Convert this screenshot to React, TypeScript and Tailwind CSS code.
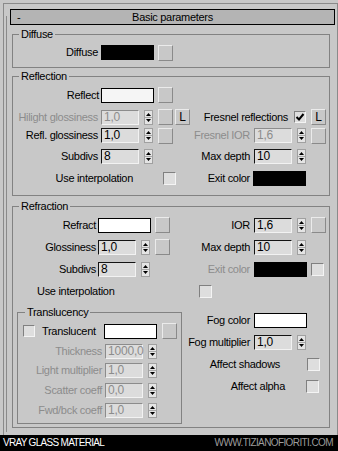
import React from 'react';

type Kids = { children?: React.ReactNode; className?: string };

function Lab({ w, dim, children }: { w: string; dim?: boolean; children: React.ReactNode }) {
  return (
    <div className={`${w} shrink-0 text-right whitespace-nowrap ${dim ? 'text-[#8c8c8c]' : ''}`}>
      {children}
    </div>
  );
}

function Field({ v, dim }: { v: string; dim?: boolean }) {
  return (
    <div
      className={`w-[38px] h-[15px] shrink-0 border pl-[2px] text-[12px] tracking-[-0.2px] leading-[13px] bg-[#dcdcdc] border-r-[#f2f2f2] border-b-[#f2f2f2] ${
        dim ? 'border-t-[#8c8c8c] border-l-[#8c8c8c] text-[#8c8c8c]' : 'border-t-[#141414] border-l-[#141414] text-black'
      }`}
    >
      {v}
    </div>
  );
}

function Spin({ className = '' }: Kids) {
  return (
    <svg width="9" height="15" viewBox="0 0 9 15" className={`shrink-0 ${className}`}>
      <rect x="0.5" y="0.5" width="8" height="14" fill="#e4e4e4" stroke="#a0a0a0" />
      <line x1="1" y1="7.5" x2="8" y2="7.5" stroke="#a8a8a8" />
      <path d="M2 6h5L4.5 3z" fill="#000" />
      <path d="M2 9h5l-2.5 3z" fill="#000" />
    </svg>
  );
}

function Btn({ children, className = '' }: Kids) {
  return (
    <div
      className={`w-[15px] h-[16px] shrink-0 border border-t-[#ebebeb] border-l-[#ebebeb] border-r-[#8a8a8a] border-b-[#8a8a8a] flex items-center justify-center text-[12px] text-black leading-none ${className}`}
    >
      {children}
    </div>
  );
}

function Check({ on, small, className = '' }: { on?: boolean; small?: boolean; className?: string }) {
  return (
    <div
      className={`${small ? 'w-[12px] h-[12px]' : 'w-[13px] h-[13px]'} shrink-0 border border-t-[#808080] border-l-[#808080] border-r-[#f4f4f4] border-b-[#f4f4f4] bg-[#dedede] flex items-center justify-center ${className}`}
    >
      {on && (
        <svg width="10" height="10" viewBox="0 0 10 10">
          <path d="M1.5 5l2.5 2.5L8.5 2" fill="none" stroke="#000" strokeWidth="2" />
        </svg>
      )}
    </div>
  );
}

function Swatch({ c, className = '' }: { c: string; className?: string }) {
  return <div className={`w-[53px] h-[15px] shrink-0 border border-black ${c} ${className}`} />;
}

function Group({ title, className = '', legend = 'ml-[6px]', children }: Kids & { title: string; legend?: string }) {
  return (
    <fieldset className={`border border-[#828282] ${className}`}>
      <legend className={`${legend} px-[2px] leading-[12px]`}>{title}</legend>
      {children}
    </fieldset>
  );
}

export default function App() {
  return (
    <div className="w-[338px] h-[451px] bg-[#c8c8c8] flex flex-col overflow-hidden text-[11px] tracking-[-0.3px] text-black font-['Liberation_Sans',Arial,sans-serif]">
      <div className="h-[435px] pt-[3px] pl-[3px]">
        <div className="w-[335px] h-full border-l border-t border-r border-[#8a8a8a]">
          <div className="ml-[2px] mt-[12px] h-[416px] border-l border-[#8a8a8a] flex flex-col items-start">
            {/* rollout title */}
            <div className="-mt-[7px] ml-[3px] w-[325px] h-[16px] shrink-0 border border-black bg-[#b4b4b4] grid grid-cols-[20px_1fr_20px] items-center leading-[14px]">
              <span className="pl-[6px]">-</span>
              <span className="text-center">Basic parameters</span>
              <span />
            </div>

            {/* Diffuse */}
            <Group title="Diffuse" className="ml-[5px] mt-[3px] w-[318px]">
              <div className="pt-[4px] pb-[6px]">
                <div className="flex items-center h-[17px]">
                  <Lab w="w-[88px] pr-[3px]">Diffuse</Lab>
                  <Swatch c="bg-black" />
                  <Btn className="ml-[4px]" />
                </div>
              </div>
            </Group>

            {/* Reflection */}
            <Group title="Reflection" className="ml-[5px] mt-[2px] w-[318px]">
              <div className="pb-[6px]">
                <div className="flex items-center h-[26px]">
                  <Lab w="w-[88px] pr-[2px]">Reflect</Lab>
                  <Swatch c="bg-[#f5f5f5]" />
                  <Btn className="ml-[4px]" />
                </div>
                <div className="flex items-center h-[18px]">
                  <div className="w-[177px] flex items-center">
                    <Lab w="w-[88px] pr-[3px]" dim>Hilight glossiness</Lab>
                    <Field v="1,0" dim />
                    <Spin className="ml-[5px]" />
                    <Btn className="ml-[5px]" />
                    <Btn className="ml-[2px]">L</Btn>
                  </div>
                  <div className="flex items-center">
                    <Lab w="w-[104px] pr-[6px]">Fresnel reflections</Lab>
                    <Check on small />
                    <Btn className="ml-[5px]">L</Btn>
                  </div>
                </div>
                <div className="flex items-center h-[19px]">
                  <div className="w-[177px] flex items-center">
                    <Lab w="w-[88px] pr-[3px]">Refl. glossiness</Lab>
                    <Field v="1,0" />
                    <Spin className="ml-[5px]" />
                    <Btn className="ml-[5px]" />
                  </div>
                  <div className="flex items-center">
                    <Lab w="w-[64px] pr-[4px]" dim>Fresnel IOR</Lab>
                    <Field v="1,6" dim />
                    <Spin className="ml-[5px]" />
                    <Btn className="ml-[5px]" />
                  </div>
                </div>
                <div className="flex items-center h-[22px]">
                  <div className="w-[177px] flex items-center">
                    <Lab w="w-[88px] pr-[3px]">Subdivs</Lab>
                    <Field v="8" />
                    <Spin className="ml-[5px]" />
                  </div>
                  <div className="flex items-center">
                    <Lab w="w-[64px] pr-[4px]">Max depth</Lab>
                    <Field v="10" />
                    <Spin className="ml-[5px]" />
                  </div>
                </div>
                <div className="flex items-center h-[22px]">
                  <div className="w-[177px] flex items-center">
                    <Lab w="w-[121px] pr-[1px]">Use interpolation</Lab>
                    <Check className="ml-[29px]" />
                  </div>
                  <div className="flex items-center">
                    <Lab w="w-[63px] pr-[3px]">Exit color</Lab>
                    <Swatch c="bg-black" />
                  </div>
                </div>
              </div>
            </Group>

            {/* Refraction */}
            <Group title="Refraction" className="ml-[5px] mt-[4px] w-[318px]">
              <div className="pt-[2px] pb-[3px]">
                <div className="flex items-center h-[22px]">
                  <div className="w-[177px] flex items-center">
                    <Lab w="w-[85px] pr-[2px]">Refract</Lab>
                    <Swatch c="bg-white" />
                    <Btn className="ml-[4px]" />
                  </div>
                  <div className="flex items-center">
                    <Lab w="w-[64px] pr-[4px]">IOR</Lab>
                    <Field v="1,6" />
                    <Spin className="ml-[5px]" />
                    <Btn className="ml-[5px]" />
                  </div>
                </div>
                <div className="flex items-center h-[22px]">
                  <div className="w-[177px] flex items-center">
                    <Lab w="w-[85px] pr-[2px]">Glossiness</Lab>
                    <Field v="1,0" />
                    <Spin className="ml-[5px]" />
                    <Btn className="ml-[5px]" />
                  </div>
                  <div className="flex items-center">
                    <Lab w="w-[64px] pr-[4px]">Max depth</Lab>
                    <Field v="10" />
                    <Spin className="ml-[5px]" />
                  </div>
                </div>
                <div className="flex items-center h-[22px]">
                  <div className="w-[177px] flex items-center">
                    <Lab w="w-[85px] pr-[2px]">Subdivs</Lab>
                    <Field v="8" />
                    <Spin className="ml-[5px]" />
                  </div>
                  <div className="flex items-center">
                    <Lab w="w-[64px] pr-[4px]" dim>Exit color</Lab>
                    <Swatch c="bg-black" />
                    <Check className="ml-[4px]" />
                  </div>
                </div>
                <div className="flex items-center h-[22px]">
                  <div className="ml-[24px] w-[162px] whitespace-nowrap">Use interpolation</div>
                  <Check />
                </div>

                <div className="flex items-start">
                  {/* Translucency */}
                  <Group title="Translucency" legend="ml-[7px]" className="ml-[4px] mt-[4px] w-[165px]">
                    <div className="pt-[2px] pb-[2px]">
                      <div className="flex items-center h-[22px]">
                        <Check small className="ml-[5px]" />
                        <div className="ml-[7px] w-[62px] whitespace-nowrap">Translucent</div>
                        <Swatch c="bg-white" />
                        <Btn className="ml-[5px]" />
                      </div>
                      <div className="flex items-center h-[19px]">
                        <Lab w="w-[87px] pr-[3px]" dim>Thickness</Lab>
                        <Field v="1000,0" dim />
                        <Spin className="ml-[5px]" />
                      </div>
                      <div className="flex items-center h-[19px]">
                        <Lab w="w-[87px] pr-[3px]" dim>Light multiplier</Lab>
                        <Field v="1,0" dim />
                        <Spin className="ml-[5px]" />
                      </div>
                      <div className="flex items-center h-[20px]">
                        <Lab w="w-[87px] pr-[3px]" dim>Scatter coeff</Lab>
                        <Field v="0,0" dim />
                        <Spin className="ml-[5px]" />
                      </div>
                      <div className="flex items-center h-[21px]">
                        <Lab w="w-[87px] pr-[3px]" dim>Fwd/bck coeff</Lab>
                        <Field v="1,0" dim />
                        <Spin className="ml-[5px]" />
                      </div>
                    </div>
                  </Group>

                  {/* fog column */}
                  <div className="pt-[8px] flex flex-col">
                    <div className="flex items-center h-[21px]">
                      <Lab w="w-[72px] pr-[4px]">Fog color</Lab>
                      <Swatch c="bg-white" />
                    </div>
                    <div className="flex items-center h-[22px]">
                      <Lab w="w-[72px] pr-[4px]">Fog multiplier</Lab>
                      <Field v="1,0" />
                      <Spin className="ml-[5px]" />
                    </div>
                    <div className="flex items-center h-[23px]">
                      <Lab w="w-[99px] pr-[1px]">Affect shadows</Lab>
                      <Check className="ml-[26px]" />
                    </div>
                    <div className="flex items-center h-[20px]">
                      <Lab w="w-[104px] pr-[1px]">Affect alpha</Lab>
                      <Check className="ml-[20px]" />
                    </div>
                  </div>
                </div>
              </div>
            </Group>
          </div>
        </div>
      </div>

      {/* footer strip */}
      <div className="h-[16px] bg-black flex items-center justify-between pl-[3px] pr-[5px] text-[10px] leading-none">
        <span className="text-white tracking-[-0.7px]">VRAY GLASS MATERIAL</span>
        <span className="text-[#9c9c9c] tracking-[-0.6px]">WWW.TIZIANOFIORITI.COM</span>
      </div>
    </div>
  );
}
